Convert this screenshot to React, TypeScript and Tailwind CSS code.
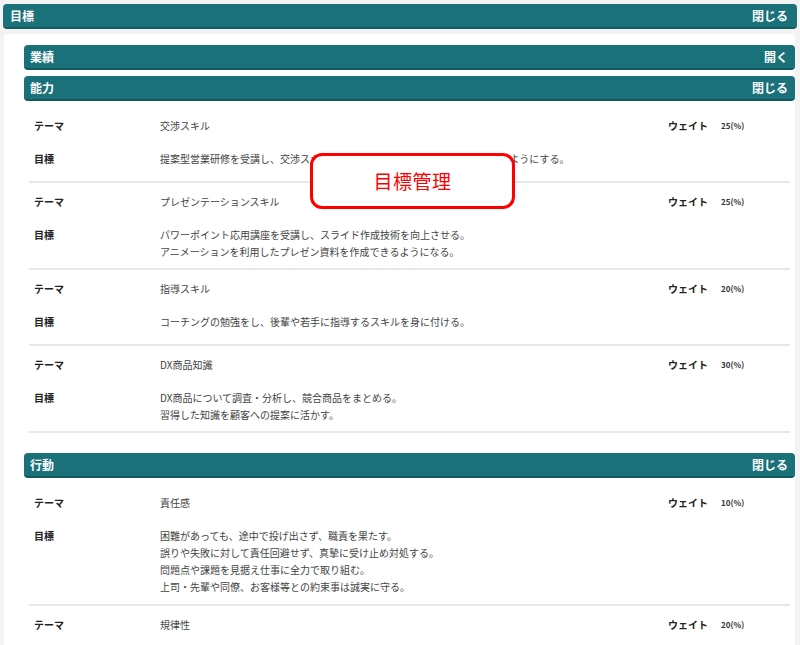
import React from 'react'

type Goal = {
  theme: string
  weight: number
  lines: string[]
}

const ability: Goal[] = [
  {
    theme: '交渉スキル',
    weight: 25,
    lines: ['提案型営業研修を受講し、交渉スキルを身に付けて、顧客と円滑に交渉できるようにする。'],
  },
  {
    theme: 'プレゼンテーションスキル',
    weight: 25,
    lines: [
      'パワーポイント応用講座を受講し、スライド作成技術を向上させる。',
      'アニメーションを利用したプレゼン資料を作成できるようになる。',
    ],
  },
  {
    theme: '指導スキル',
    weight: 20,
    lines: ['コーチングの勉強をし、後輩や若手に指導するスキルを身に付ける。'],
  },
  {
    theme: 'DX商品知識',
    weight: 30,
    lines: [
      'DX商品について調査・分析し、競合商品をまとめる。',
      '習得した知識を顧客への提案に活かす。',
    ],
  },
]

const action: Goal[] = [
  {
    theme: '責任感',
    weight: 10,
    lines: [
      '困難があっても、途中で投げ出さず、職責を果たす。',
      '誤りや失敗に対して責任回避せず、真摯に受け止め対処する。',
      '問題点や課題を見据え仕事に全力で取り組む。',
      '上司・先輩や同僚、お客様等との約束事は誠実に守る。',
    ],
  },
  {
    theme: '規律性',
    weight: 20,
    lines: ['就業規則や職場のルールを守り、周囲の模範となる行動をとる。'],
  },
]

function SectionBar({ title, action }: { title: string; action: string }) {
  return (
    <div className="flex h-[25px] items-center justify-between rounded-[4px] border-b-2 border-[#135a60] bg-[#1b717a] pl-[6px] pr-[7px] text-[12px] font-bold text-white">
      <span>{title}</span>
      <span>{action}</span>
    </div>
  )
}

function GoalRow({ goal }: { goal: Goal }) {
  return (
    <div className="border-b-2 border-[#e4e8ec] pb-[8.5px] pl-[5px] pt-[10px] text-[10px] leading-[17px]">
      <div className="flex">
        <span className="w-[126px] shrink-0 font-bold text-[#222]">テーマ</span>
        <span className="flex-1 text-[#444]">{goal.theme}</span>
        <span className="w-[53px] shrink-0 font-bold text-[#222]">ウェイト</span>
        <span className="w-[69px] shrink-0 text-[8px] font-bold text-[#333]">{goal.weight}(%)</span>
      </div>
      <div className="mt-[16px] flex">
        <span className="w-[126px] shrink-0 font-bold text-[#222]">目標</span>
        <div className="min-h-[22px] flex-1 text-[#444]">
          {goal.lines.map((l) => (
            <p key={l}>{l}</p>
          ))}
        </div>
      </div>
    </div>
  )
}

export default function App() {
  return (
    <div
      className="relative h-[645px] overflow-hidden bg-[#f3f3f3] pt-[4px]"
      style={{ fontFamily: '"Noto Sans CJK JP", "Noto Sans", sans-serif' }}
    >
      <div className="mx-[3px]">
        <div className="flex h-[25px] items-center justify-between rounded-[4px] border-b-2 border-[#135a60] bg-[#1b717a] pl-[7px] pr-[9px] text-[12px] font-bold text-white">
          <span>目標</span>
          <span>閉じる</span>
        </div>
      </div>

      <div className="ml-[4px] mr-[5px] mt-[5px] rounded-t-[4px] bg-white pb-10 pl-[20px] pt-[11px]">
        <SectionBar title="業績" action="開く" />
        <div className="mt-[6px]">
          <SectionBar title="能力" action="閉じる" />
        </div>
        <div className="ml-[5px] mr-[5px] pt-[6px]">
          {ability.map((g) => (
            <GoalRow key={g.theme} goal={g} />
          ))}
        </div>

        <div className="mt-[20px]">
          <SectionBar title="行動" action="閉じる" />
        </div>
        <div className="ml-[5px] mr-[5px] pt-[6px]">
          {action.map((g) => (
            <GoalRow key={g.theme} goal={g} />
          ))}
        </div>
      </div>

      <div className="absolute left-[310px] top-[153px] flex h-[56px] w-[205px] items-center justify-center rounded-[12px] border-[3px] border-[#ff0000] bg-white text-[19px] tracking-[0.5px] text-[#ff0000]">
        目標管理
      </div>
    </div>
  )
}
